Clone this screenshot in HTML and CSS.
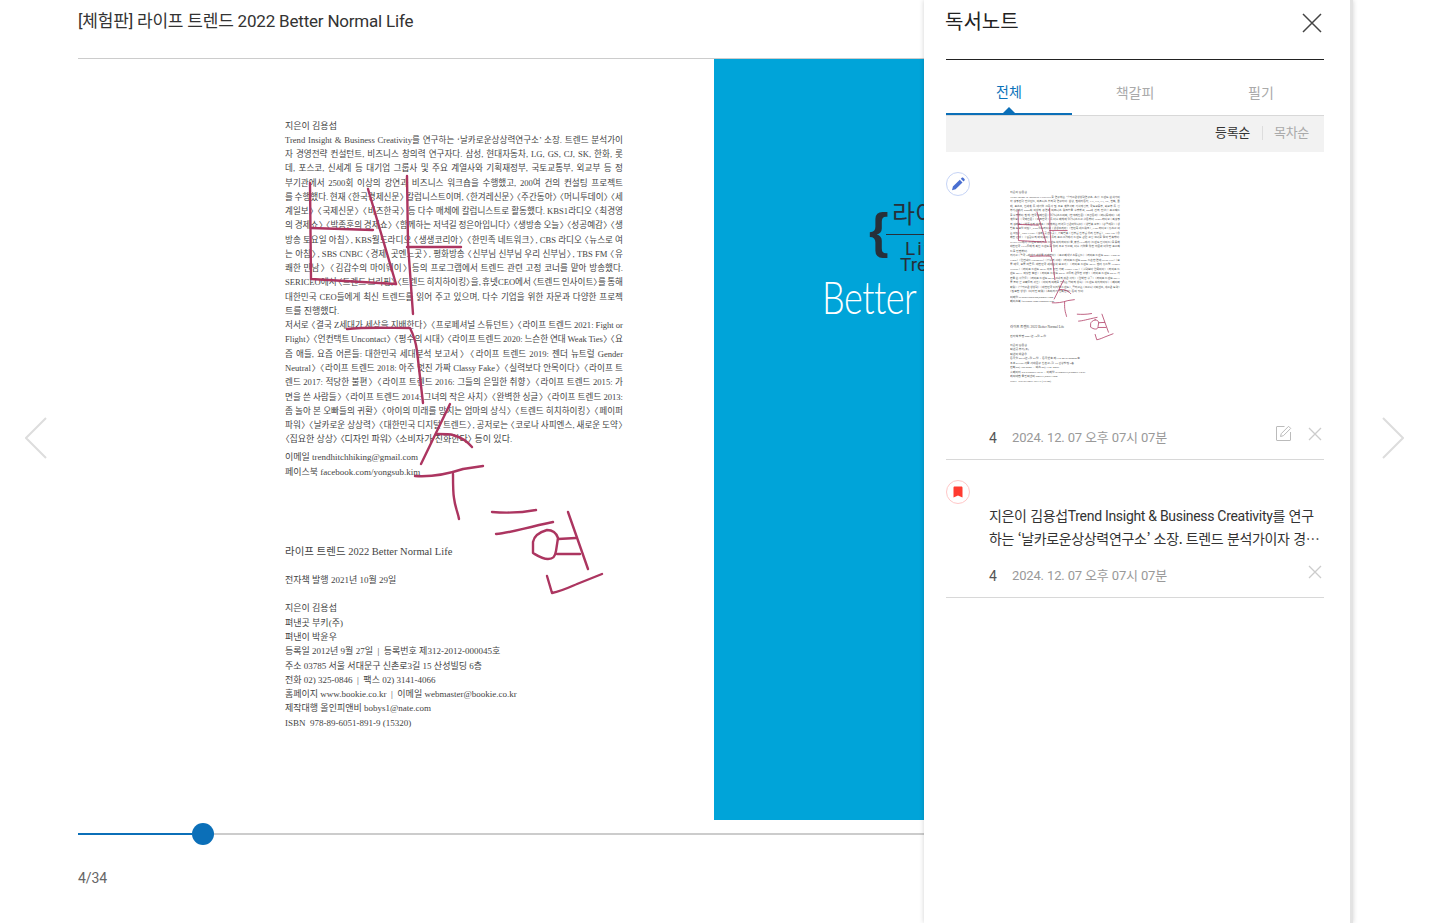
FILE: index.html

```html
<!DOCTYPE html>
<html lang="ko">
<head>
  <meta charset="UTF-8">
  <title>독서노트</title>
  <link rel="stylesheet" href="styles.css">
</head>
<body>
  <div class="viewer">
    <h1 class="book-title">[체험판] 라이프 트렌드 2022 Better Normal Life</h1>

    <div class="spread">
      <div class="leaf">
        <div class="sheet">
          <p class="ln">지은이 김용섭</p>
          <p class="ln jus">Trend Insight &amp; Business Creativity를 연구하는 ‘날카로운상상력연구소’ 소장. 트렌드 분석가이</p>
          <p class="ln jus">자 경영전략 컨설턴트, 비즈니스 창의력 연구자다. 삼성, 현대자동차, LG, GS, CJ, SK, 한화, 롯</p>
          <p class="ln jus">데, 포스코, 신세계 등 대기업 그룹사 및 주요 계열사와 기획재정부, 국토교통부, 외교부 등 정</p>
          <p class="ln jus">부기관에서 2500회 이상의 강연과 비즈니스 워크숍을 수행했고, 200여 건의 컨설팅 프로젝트</p>
          <p class="ln jus">를 수행했다. 현재 〈한국경제신문〉 칼럼니스트이며, 〈한겨레신문〉 〈주간동아〉 〈머니투데이〉 〈세</p>
          <p class="ln jus">계일보〉 〈국제신문〉 〈비즈한국〉 등 다수 매체에 칼럼니스트로 활동했다. KBS1라디오 〈최경영</p>
          <p class="ln jus">의 경제쇼〉 〈박종훈의 경제쇼〉 〈함께하는 저녁길 정은아입니다〉 〈생방송 오늘〉 〈성공예감〉 〈생</p>
          <p class="ln jus">방송 토요일 아침〉, KBS월드라디오 〈생생코리아〉 〈한민족 네트워크〉, CBS 라디오 〈뉴스로 여</p>
          <p class="ln jus">는 아침〉, SBS CNBC 〈경제, 곳엔느곳〉, 평화방송 〈신부님 신부님 우리 신부님〉, TBS FM 〈유</p>
          <p class="ln jus">쾌한 만남〉 〈김갑수의 마이웨이〉 등의 프로그램에서 트렌드 관련 고정 코너를 맡아 방송했다.</p>
          <p class="ln jus">SERICEO에서 〈트렌드 브리핑〉 〈트렌드 히치하이킹〉을, 휴넷CEO에서 〈트렌드 인사이트〉를 통해</p>
          <p class="ln jus">대한민국 CEO들에게 최신 트렌드를 읽어 주고 있으며, 다수 기업을 위한 자문과 다양한 프로젝</p>
          <p class="ln">트를 진행했다.</p>
          <p class="ln jus">저서로 〈결국 Z세대가 세상을 지배한다〉 〈프로페셔널 스튜던트〉 〈라이프 트렌드 2021: Fight or</p>
          <p class="ln jus">Flight〉 〈언컨택트 Uncontact〉 〈평수의 시대〉 〈라이프 트렌드 2020: 느슨한 연대 Weak Ties〉 〈요</p>
          <p class="ln jus">즘 애들, 요즘 어른들: 대한민국 세대분석 보고서〉 〈라이프 트렌드 2019: 젠더 뉴트럴 Gender</p>
          <p class="ln jus">Neutral〉 〈라이프 트렌드 2018: 아주 멋진 가짜 Classy Fake〉 〈실력보다 안목이다〉 〈라이프 트</p>
          <p class="ln jus">렌드 2017: 적당한 불편〉 〈라이프 트렌드 2016: 그들의 은밀한 취향〉 〈라이프 트렌드 2015: 가</p>
          <p class="ln jus">면을 쓴 사람들〉 〈라이프 트렌드 2014: 그녀의 작은 사치〉 〈완벽한 싱글〉 〈라이프 트렌드 2013:</p>
          <p class="ln jus">좀 놀아 본 오빠들의 귀환〉 〈아이의 미래를 망치는 엄마의 상식〉 〈트렌드 히치하이킹〉 〈페이퍼</p>
          <p class="ln jus">파워〉 〈날카로운 상상력〉 〈대한민국 디지털 트렌드〉, 공저로는 〈코로나 사피엔스, 새로운 도약〉</p>
          <p class="ln">〈집요한 상상〉 〈디자인 파워〉 〈소비자가 진화한다〉 등이 있다.</p>
          <p class="ln gap-s">이메일 trendhitchhiking@gmail.com</p>
          <p class="ln">페이스북 facebook.com/yongsub.kim</p>
          <p class="ln big">라이프 트렌드 2022 Better Normal Life</p>
          <p class="ln gap-m">전자책 발행 2021년 10월 29일</p>
          <p class="ln gap-m">지은이 김용섭</p>
          <p class="ln">펴낸곳 부키(주)</p>
          <p class="ln">펴낸이 박윤우</p>
          <p class="ln">등록일 2012년 9월 27일 &nbsp;|&nbsp; 등록번호 제312-2012-000045호</p>
          <p class="ln">주소 03785 서울 서대문구 신촌로3길 15 산성빌딩 6층</p>
          <p class="ln">전화 02) 325-0846 &nbsp;|&nbsp; 팩스 02) 3141-4066</p>
          <p class="ln">홈페이지 www.bookie.co.kr &nbsp;|&nbsp; 이메일 webmaster@bookie.co.kr</p>
          <p class="ln">제작대행 올인피앤비 bobys1@nate.com</p>
          <p class="ln">ISBN &nbsp;978-89-6051-891-9 (15320)</p>

          <svg class="ink" viewBox="0 0 338 640" width="338" height="640" aria-hidden="true">
            <g id="strokes" transform="translate(-285 -118)" fill="none" stroke="#ac3560" stroke-width="2.4" stroke-linecap="round" stroke-linejoin="round">
              <path d="M310 182 311 278 396 283"/>
              <path d="M311 227 373 229"/>
              <path d="M368 188 396 283"/>
              <path d="M407 175 408 243 413 313"/>
              <path d="M407 246 461 246"/>
              <path d="M347 328 C365 326 390 327 410 327 C414 335 416 342 417 350 L423 402"/>
              <path d="M450 403 421 463"/>
              <path d="M437 433 C445 433 450 433 453 434 C460 436 467 440 472 446"/>
              <path d="M415 475 C430 476 445 474 463 468 L483 465"/>
              <path d="M453 473 C453 485 453 492 454 497 C455 506 458 512 459 518"/>
              <path d="M492 511 C505 512 520 512 536 509"/>
              <path d="M496 533 C510 532 520 528 553 521"/>
              <path d="M547 529 C540 531 534 535 533 541 L533 552 C538 555 542 558 548 558 C553 558 555 556 556 550 L558 537 C556 531 552 529 547 529Z"/>
              <path d="M568 511 588 568"/>
              <path d="M558 538 576 537"/>
              <path d="M557 553 580 553"/>
              <path d="M547 575 552 592 C562 590 570 586 577 583 L602 573"/>
            </g>
          </svg>
        </div>
      </div>

      <div class="leaf cover">
        <span class="cv-brace">{</span>
        <span class="cv-ko">라이프</span>
        <span class="cv-bar"></span>
        <span class="cv-en">Life</span>
        <span class="cv-en2">Trend</span>
        <span class="cv-better">Better Normal Life</span>
      </div>
    </div>

    <div class="slider">
      <span class="slider-fill"></span>
      <span class="slider-knob"></span>
      <span class="slider-rest"></span>
    </div>
    <div class="page-count">4/34</div>
  </div>

  <svg class="arrow arrow-prev" viewBox="0 0 22 42" width="22" height="42" aria-hidden="true"><path d="M21 1 1 21 21 41"/></svg>
  <svg class="arrow arrow-next" viewBox="0 0 22 42" width="22" height="42" aria-hidden="true"><path d="M1 1 21 21 1 41"/></svg>

  <aside class="note-panel">
    <div class="note-head">
      <h2>독서노트</h2>
      <svg class="close-big" viewBox="0 0 20 20" width="20" height="20" aria-hidden="true"><path d="M1 1 19 19M19 1 1 19"/></svg>
    </div>

    <div class="tabs">
      <div class="tab on">전체</div>
      <div class="tab">책갈피</div>
      <div class="tab">필기</div>
    </div>

    <div class="sort-bar">
      <span class="sort on">등록순</span>
      <span class="sort-sep"></span>
      <span class="sort">목차순</span>
    </div>

    <div class="note">
      <span class="badge badge-pen">
        <svg viewBox="0 0 16 16" width="16" height="16" aria-hidden="true"><path d="M2 14.2 2.9 10.6 9.8 3.7 12.5 6.4 5.6 13.3ZM10.8 2.7 11.8 1.7C12.2 1.3 12.8 1.3 13.2 1.7L14.5 3C14.9 3.4 14.9 4 14.5 4.4L13.5 5.4Z"/></svg>
      </span>
      <div class="thumb">
        <div class="thumb-in">
          <p class="ln">지은이 김용섭</p>
          <p class="ln jus">Trend Insight &amp; Business Creativity를 연구하는 ‘날카로운상상력연구소’ 소장. 트렌드 분석가이</p>
          <p class="ln jus">자 경영전략 컨설턴트, 비즈니스 창의력 연구자다. 삼성, 현대자동차, LG, GS, CJ, SK, 한화, 롯</p>
          <p class="ln jus">데, 포스코, 신세계 등 대기업 그룹사 및 주요 계열사와 기획재정부, 국토교통부, 외교부 등 정</p>
          <p class="ln jus">부기관에서 2500회 이상의 강연과 비즈니스 워크숍을 수행했고, 200여 건의 컨설팅 프로젝트</p>
          <p class="ln jus">를 수행했다. 현재 〈한국경제신문〉 칼럼니스트이며, 〈한겨레신문〉 〈주간동아〉 〈머니투데이〉 〈세</p>
          <p class="ln jus">계일보〉 〈국제신문〉 〈비즈한국〉 등 다수 매체에 칼럼니스트로 활동했다. KBS1라디오 〈최경영</p>
          <p class="ln jus">의 경제쇼〉 〈박종훈의 경제쇼〉 〈함께하는 저녁길 정은아입니다〉 〈생방송 오늘〉 〈성공예감〉 〈생</p>
          <p class="ln jus">방송 토요일 아침〉, KBS월드라디오 〈생생코리아〉 〈한민족 네트워크〉, CBS 라디오 〈뉴스로 여</p>
          <p class="ln jus">는 아침〉, SBS CNBC 〈경제, 곳엔느곳〉, 평화방송 〈신부님 신부님 우리 신부님〉, TBS FM 〈유</p>
          <p class="ln jus">쾌한 만남〉 〈김갑수의 마이웨이〉 등의 프로그램에서 트렌드 관련 고정 코너를 맡아 방송했다.</p>
          <p class="ln jus">SERICEO에서 〈트렌드 브리핑〉 〈트렌드 히치하이킹〉을, 휴넷CEO에서 〈트렌드 인사이트〉를 통해</p>
          <p class="ln jus">대한민국 CEO들에게 최신 트렌드를 읽어 주고 있으며, 다수 기업을 위한 자문과 다양한 프로젝</p>
          <p class="ln">트를 진행했다.</p>
          <p class="ln jus">저서로 〈결국 Z세대가 세상을 지배한다〉 〈프로페셔널 스튜던트〉 〈라이프 트렌드 2021: Fight or</p>
          <p class="ln jus">Flight〉 〈언컨택트 Uncontact〉 〈평수의 시대〉 〈라이프 트렌드 2020: 느슨한 연대 Weak Ties〉 〈요</p>
          <p class="ln jus">즘 애들, 요즘 어른들: 대한민국 세대분석 보고서〉 〈라이프 트렌드 2019: 젠더 뉴트럴 Gender</p>
          <p class="ln jus">Neutral〉 〈라이프 트렌드 2018: 아주 멋진 가짜 Classy Fake〉 〈실력보다 안목이다〉 〈라이프 트</p>
          <p class="ln jus">렌드 2017: 적당한 불편〉 〈라이프 트렌드 2016: 그들의 은밀한 취향〉 〈라이프 트렌드 2015: 가</p>
          <p class="ln jus">면을 쓴 사람들〉 〈라이프 트렌드 2014: 그녀의 작은 사치〉 〈완벽한 싱글〉 〈라이프 트렌드 2013:</p>
          <p class="ln jus">좀 놀아 본 오빠들의 귀환〉 〈아이의 미래를 망치는 엄마의 상식〉 〈트렌드 히치하이킹〉 〈페이퍼</p>
          <p class="ln jus">파워〉 〈날카로운 상상력〉 〈대한민국 디지털 트렌드〉, 공저로는 〈코로나 사피엔스, 새로운 도약〉</p>
          <p class="ln">〈집요한 상상〉 〈디자인 파워〉 〈소비자가 진화한다〉 등이 있다.</p>
          <p class="ln gap-s">이메일 trendhitchhiking@gmail.com</p>
          <p class="ln">페이스북 facebook.com/yongsub.kim</p>
          <p class="ln big">라이프 트렌드 2022 Better Normal Life</p>
          <p class="ln gap-m">전자책 발행 2021년 10월 29일</p>
          <p class="ln gap-m">지은이 김용섭</p>
          <p class="ln">펴낸곳 부키(주)</p>
          <p class="ln">펴낸이 박윤우</p>
          <p class="ln">등록일 2012년 9월 27일 &nbsp;|&nbsp; 등록번호 제312-2012-000045호</p>
          <p class="ln">주소 03785 서울 서대문구 신촌로3길 15 산성빌딩 6층</p>
          <p class="ln">전화 02) 325-0846 &nbsp;|&nbsp; 팩스 02) 3141-4066</p>
          <p class="ln">홈페이지 www.bookie.co.kr &nbsp;|&nbsp; 이메일 webmaster@bookie.co.kr</p>
          <p class="ln">제작대행 올인피앤비 bobys1@nate.com</p>
          <p class="ln">ISBN &nbsp;978-89-6051-891-9 (15320)</p>
          <svg class="ink" viewBox="0 0 338 640" width="338" height="640" aria-hidden="true"><use href="#strokes"/></svg>
        </div>
      </div>
      <div class="note-meta">
        <span class="note-page">4</span>
        <span class="note-date">2024. 12. 07 오후 07시 07분</span>
        <svg class="act-edit" viewBox="0 0 16 16" width="16" height="16" aria-hidden="true"><path d="M8.5 1.5H1A.5.5 0 0 0 .5 2V15A.5.5 0 0 0 1 15.5H14A.5.5 0 0 0 14.5 15V7"/><path d="M4.5 11.5 5.3 8.6 12.6 1.3 14.7 3.4 7.4 10.7Z"/></svg>
        <svg class="act-del" viewBox="0 0 14 14" width="14" height="14" aria-hidden="true"><path d="M1 1 13 13M13 1 1 13"/></svg>
      </div>
    </div>

    <div class="note">
      <span class="badge badge-mark">
        <svg viewBox="0 0 12 12" width="12" height="12" aria-hidden="true"><path d="M1.5 1.6C1.5 .9 2 .5 2.6 .5H9.4C10 .5 10.5 .9 10.5 1.6V11.5L6 9.6 1.5 11.5Z"/></svg>
      </span>
      <p class="note-text">지은이 김용섭<span class="la">Trend Insight &amp; Business Creativity</span>를 연구하는 ‘날카로운상상력연구소’ 소장. 트렌드 분석가이자 경영전략 컨설턴트, 비즈니스 창의력 연구자다.</p>
      <div class="note-meta meta-text">
        <span class="note-page">4</span>
        <span class="note-date">2024. 12. 07 오후 07시 07분</span>
        <svg class="act-del" viewBox="0 0 14 14" width="14" height="14" aria-hidden="true"><path d="M1 1 13 13M13 1 1 13"/></svg>
      </div>
    </div>
  </aside>
</body>
</html>
```

FILE: styles.css

```css
* {
  box-sizing: border-box;
}
html, body {
  margin: 0;
  height: 100%;
}
body {
  position: relative;
  width: 1430px;
  height: 923px;
  overflow: hidden;
  background: #fff;
  font-family: Roboto, "Noto Sans CJK KR", sans-serif;
  color: #333;
}
p, h1, h2 {
  margin: 0;
  font-weight: 400;
}

/* viewer */
.viewer {
  width: 1352px;
  padding-left: 78px;
}
.book-title {
  height: 59px;
  padding-top: 8px;
  border-bottom: 1px solid #ccc;
  font-size: 17px;
  line-height: 26px;
  letter-spacing: -0.2px;
  color: #333;
}
.spread {
  display: flex;
  height: 761px;
}
.leaf {
  flex: 0 0 636px;
  overflow: hidden;
}
.sheet {
  position: relative;
  width: 338px;
  margin: 59.5px 0 0 207px;
}

/* book text, also used by the thumbnail */
.ln {
  height: 14.27px;
  font-family: "Liberation Serif", "Noto Sans CJK KR", serif;
  font-size: 9px;
  line-height: 14.27px;
  font-feature-settings: "palt";
  white-space: nowrap;
  color: #444;
}
.jus {
  font-size: 8.6px;
  word-spacing: -1px;
  white-space: normal;
  text-align: justify;
  text-align-last: justify;
}
.gap-s {
  margin-top: 3.8px;
}
.gap-m {
  margin-top: 14px;
}
.big {
  margin-top: 66px;
  font-size: 10.5px;
}
.ink {
  position: absolute;
  left: 0;
  top: 0;
  overflow: visible;
}

/* cover page, lies under the panel */
.cover {
  position: relative;
  background: #00a4d9;
  flex-basis: 638px;
}
.cover span {
  position: absolute;
  white-space: nowrap;
}
.cv-brace {
  left: 155px;
  top: 136px;
  font-family: "Liberation Sans", sans-serif;
  font-weight: 700;
  font-size: 50px;
  line-height: 72px;
  color: #27303a;
}
.cv-ko {
  left: 178px;
  top: 138px;
  font-size: 25px;
  line-height: 36px;
  color: #27303a;
}
.cv-bar {
  left: 172px;
  top: 175px;
  width: 60px;
  height: 1px;
  background: #27303a;
}
.cv-en {
  left: 191px;
  top: 178px;
  font-size: 19px;
  line-height: 24px;
  letter-spacing: 2px;
  color: #27303a;
}
.cv-en2 {
  left: 186px;
  top: 194px;
  font-size: 19px;
  line-height: 24px;
  color: #27303a;
}
.cv-better {
  left: 108px;
  top: 207px;
  font-family: "Lato", sans-serif;
  font-weight: 300;
  font-size: 36px;
  line-height: 60px;
  letter-spacing: -0.5px;
  color: #fff;
  transform: scaleY(1.25);
}

/* slider and page number */
.slider {
  display: flex;
  align-items: center;
  height: 22px;
  margin-top: 3px;
}
.slider-fill {
  flex: 0 0 114px;
  height: 2px;
  background: #0b6fb8;
}
.slider-knob {
  flex: 0 0 22px;
  height: 22px;
  border-radius: 50%;
  background: #0b6fb8;
}
.slider-rest {
  flex: 1;
  height: 2px;
  background: #ccc;
}
.page-count {
  margin-top: 22px;
  font-size: 14px;
  line-height: 22px;
  letter-spacing: -0.1px;
  color: #666;
}

.arrow {
  position: absolute;
  fill: none;
  stroke: #ddd;
  stroke-width: 2;
}
.arrow-prev {
  left: 25px;
  top: 417px;
}
.arrow-next {
  left: 1382px;
  top: 417px;
}

/* note panel */
.note-panel {
  position: absolute;
  left: 924px;
  top: 0;
  width: 429px;
  height: 923px;
  padding: 0 26px 0 22px;
  background: #fff;
  border-right: 3px solid #e3e3e3;
  box-shadow: 0 0 5px rgba(0,0,0,0.18);
}
.note-head {
  display: flex;
  justify-content: space-between;
  height: 60px;
  border-bottom: 1px solid #222;
  padding-top: 7px;
}
.note-head h2 {
  margin-left: -1px;
  font-size: 20px;
  line-height: 30px;
  color: #222;
}
.close-big {
  margin: 6px 2px 0 0;
  fill: none;
  stroke: #444;
  stroke-width: 1.5;
}
.tabs {
  display: flex;
  height: 56px;
  border-bottom: 1px solid #d8d8d8;
}
.tab {
  position: relative;
  flex: 1;
  padding-top: 21px;
  text-align: center;
  font-size: 14px;
  line-height: 24px;
  color: #aaa;
}
.tab.on {
  padding-top: 20px;
  color: #0b72b9;
  border-bottom: 2px solid #0b6fb8;
  height: 55px;
}
.tab.on::after {
  content: "";
  position: absolute;
  left: 57px;
  bottom: 0;
  border: 6px solid transparent;
  border-top: 0;
  border-bottom-color: #0b6fb8;
}
.sort-bar {
  display: flex;
  align-items: center;
  justify-content: flex-end;
  height: 36px;
  padding: 0 15px 2px 0;
  background: #f2f2f2;
}
.sort {
  font-size: 13px;
  line-height: 20px;
  letter-spacing: -0.3px;
  color: #aaa;
}
.sort.on {
  color: #333;
}
.sort-sep {
  width: 1px;
  height: 14px;
  margin: 0 11px 0 12px;
  background: #ddd;
}
.note {
  padding: 20px 0 11px;
  border-bottom: 1px solid #d8d8d8;
}
.badge {
  display: flex;
  align-items: center;
  justify-content: center;
  width: 24px;
  height: 24px;
  border-radius: 50%;
  border: 1px solid #c6d4f6;
  fill: #4a6fd1;
}
.badge-mark {
  border-color: #ffc7c7;
  fill: #ff3b30;
}
.thumb {
  width: 112px;
  height: 204px;
  margin: -6px 0 0 64px;
  overflow: hidden;
}
.thumb-in {
  position: relative;
  width: 338px;
  transform: scale(0.325, 0.316);
  transform-origin: 0 0;
}
.note-meta {
  display: flex;
  align-items: center;
  height: 20px;
  margin-top: 34px;
  padding-left: 43px;
}
.note-page {
  width: 23px;
  font-size: 14px;
  line-height: 20px;
  color: #555;
}
.note-date {
  flex: 1;
  font-size: 13px;
  line-height: 20px;
  letter-spacing: -0.15px;
  color: #999;
}
.act-edit {
  margin: -10px 16px 0 0;
  fill: none;
  stroke: #bbb;
}
.act-del {
  margin: -8px 2px 0 0;
  fill: none;
  stroke: #ccc;
  stroke-width: 1.3;
}
.note-text {
  display: -webkit-box;
  -webkit-box-orient: vertical;
  -webkit-line-clamp: 2;
  overflow: hidden;
  height: 44px;
  margin: 0 4px 0 43px;
  font-family: "Noto Sans CJK KR", sans-serif;
  font-size: 14px;
  line-height: 22px;
  letter-spacing: -0.35px;
  color: #333;
}
.la {
  font-family: Roboto, sans-serif;
  letter-spacing: -0.3px;
}
.meta-text {
  margin-top: 18px;
}
```
